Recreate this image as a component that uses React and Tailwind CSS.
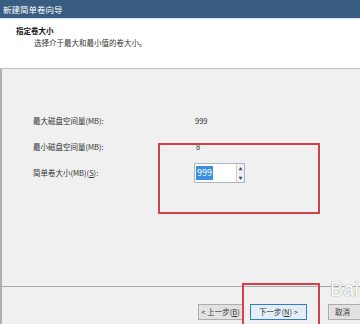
import React from "react";

const font = {
  fontFamily: '"Noto Sans CJK SC", "Liberation Sans", sans-serif',
};

const Spinner = () => (
  <div className="flex h-[20px] w-[51px] border border-[#a9b7c9] bg-white">
    <div className="flex flex-1 items-center pl-[1px]">
      <span className="bg-[#3b8ee0] px-[1px] text-[9px] leading-[14px] text-white">
        999
      </span>
    </div>
    <div className="flex w-[8px] flex-col border-l border-[#d0d0d0] bg-[#f2f2f2]">
      <div className="flex flex-1 items-center justify-center text-[4px] text-[#444]">
        ▲
      </div>
      <div className="flex flex-1 items-center justify-center text-[4px] text-[#444]">
        ▼
      </div>
    </div>
  </div>
);

const App = () => {
  return (
    <div
      className="relative flex h-[324px] w-[360px] flex-col overflow-hidden bg-[#f0f0f0]"
      style={font}
    >
      {/* Title bar */}
      <div className="flex h-[18px] items-center bg-[#385d80] pl-[3px] text-[8.5px] text-white">
        新建简单卷向导
      </div>
      <div className="h-[1px] bg-[#d3e5f5]" />

      {/* Header */}
      <div className="flex h-[50px] flex-col border-b border-[#c2c2c2] bg-white pl-[16px] pt-[7px]">
        <div className="text-[7.5px] font-bold leading-[10px] text-[#111]">
          指定卷大小
        </div>
        <div className="pl-[18px] pt-[2px] text-[7.5px] leading-[10px] text-[#333]">
          选择介于最大和最小值的卷大小。
        </div>
      </div>

      {/* Body */}
      <div className="flex h-[217px] flex-col gap-[6px] border-l-2 border-[#b0b0b0] pl-[31px] pt-[42px] text-[7.5px] text-[#333]">
        <div className="flex h-[20px] items-center">
          <div className="w-[162px]">最大磁盘空间量(MB):</div>
          <div>999</div>
        </div>
        <div className="flex h-[20px] items-center">
          <div className="w-[162px]">最小磁盘空间量(MB):</div>
          <div className="pl-[1px]">8</div>
        </div>
        <div className="flex h-[20px] items-center">
          <div className="w-[161px]">
            简单卷大小(MB)(<span className="underline">S</span>):
          </div>
          <Spinner />
        </div>
      </div>

      {/* Footer */}
      <div className="flex flex-1 border-l-2 border-t border-[#a8a8a8] border-l-[#b0b0b0] pl-[196px] pt-[17px] text-[7.5px] text-[#333]">
        <div className="flex h-[16px] w-[45px] shrink-0 items-center justify-center border border-[#adadad] bg-[#e1e1e1]">
          &lt; 上一步(<span className="underline">B</span>)
        </div>
        <div className="ml-[7px] flex h-[16px] w-[57px] shrink-0 items-center justify-center border border-[#2f7fc6] bg-[#e3eef9]">
          下一步(<span className="underline">N</span>) &gt;
        </div>
        <div className="ml-[21px] flex h-[16px] w-[60px] shrink-0 items-center border border-[#adadad] bg-[#e1e1e1] pl-[6px]">
          取消
        </div>
      </div>

      {/* Annotation boxes */}
      <div className="absolute left-[158px] top-[143px] h-[71px] w-[162px] border-2 border-[#d6404d]" />
      <div className="absolute left-[242px] top-[283px] h-[45px] w-[78px] border-2 border-[#d6404d]" />

      {/* Watermark */}
      <div
        className="absolute left-[330px] top-[279px] text-[20px] leading-[20px] text-white"
        style={{
          fontFamily: '"Liberation Sans", sans-serif',
          textShadow: "0 0 1px #999, 0 0 1px #999",
        }}
      >
        Bai
      </div>
    </div>
  );
};

export default App;
